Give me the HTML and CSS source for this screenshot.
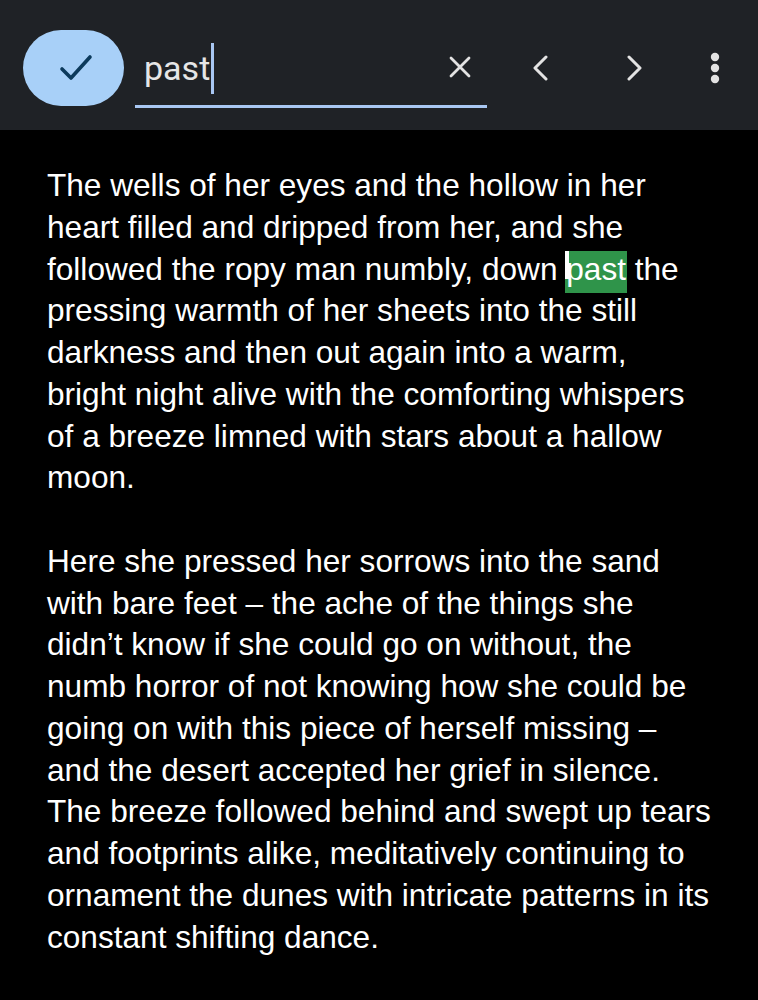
FILE: index.html
```html
<!DOCTYPE html>
<html lang="en">
<head>
<meta charset="utf-8">
<title>Find in page</title>
<link rel="stylesheet" href="styles.css">
</head>
<body>
<header class="findbar">
  <button class="done" aria-label="Done">
    <svg width="40" height="30" viewBox="0 0 40 30"><path d="M8 16 L17 25 L36 4" fill="none" stroke="#0c3a5c" stroke-width="3.6" stroke-linecap="round" stroke-linejoin="round"/></svg>
  </button>
  <div class="field">
    <span class="query">past</span><span class="caret"></span>
    <span class="grow"></span>
    <button class="icon clear" aria-label="Clear">
      <svg width="24" height="24" viewBox="0 0 24 24"><path d="M3 3 L21 21 M21 3 L3 21" stroke="#e3e3e3" stroke-width="2.8" stroke-linecap="round"/></svg>
    </button>
  </div>
  <button class="icon prev" aria-label="Previous">
    <svg width="24" height="26" viewBox="0 0 24 26"><path d="M17 2 L6 13 L17 24" fill="none" stroke="#e3e3e3" stroke-width="3" stroke-linecap="round" stroke-linejoin="round"/></svg>
  </button>
  <button class="icon next" aria-label="Next">
    <svg width="24" height="26" viewBox="0 0 24 26"><path d="M7 2 L18 13 L7 24" fill="none" stroke="#e3e3e3" stroke-width="3" stroke-linecap="round" stroke-linejoin="round"/></svg>
  </button>
  <button class="icon more" aria-label="More">
    <svg width="12" height="32" viewBox="0 0 12 32"><circle cx="6" cy="5" r="4.2" fill="#e3e3e3"/><circle cx="6" cy="16" r="4.2" fill="#e3e3e3"/><circle cx="6" cy="27" r="4.2" fill="#e3e3e3"/></svg>
  </button>
</header>
<main class="page">
  <p>The wells of her eyes and the hollow in her heart filled and dripped from her, and she followed the ropy man numbly, down <mark class="hit">past</mark> the pressing warmth of her sheets into the still darkness and then out again into a warm, bright night alive with the comforting whispers of a breeze limned with stars about a hallow moon.</p>
  <p>Here she pressed her sorrows into the sand with bare feet – the ache of the things she didn’t know if she could go on without, the numb horror of not knowing how she could be going on with this piece of herself missing – and the desert accepted her grief in silence. The breeze followed behind and swept up tears and footprints alike, meditatively continuing to ornament the dunes with intricate patterns in its constant shifting dance.</p>
</main>
</body>
</html>
```
FILE: styles.css
```css
html, body {
  margin: 0;
  padding: 0;
  background: #000;
}
body {
  width: 758px;
  min-height: 1000px;
  overflow: hidden;
}
button {
  border: 0;
  background: none;
  padding: 0;
  margin: 0;
  cursor: pointer;
}
.findbar {
  height: 130px;
  background: #1f2226;
  display: flex;
  align-items: center;
  padding-left: 23px;
  padding-top: 6px;
  box-sizing: border-box;
}
.done {
  width: 101px;
  height: 76px;
  border-radius: 38px;
  background: #a8d0f8;
  display: flex;
  align-items: center;
  justify-content: center;
  flex-shrink: 0;
}
.field {
  margin-left: 11px;
  width: 352px;
  height: 80px;
  box-sizing: border-box;
  border-bottom: 3px solid #a8c7f2;
  display: flex;
  align-items: center;
  padding-left: 9px;
}
.query {
  font-family: Roboto, "Noto Sans", sans-serif;
  font-size: 34px;
  color: #e6e6e6;
  line-height: 40px;
  padding-top: 2px;
}
.caret {
  width: 3px;
  height: 51px;
  background: #a8c7f2;
  margin-left: 1px;
  margin-top: 4px;
}
.grow { flex: 1; }
.icon {
  height: 48px;
  display: flex;
  align-items: center;
  justify-content: center;
  flex-shrink: 0;
}
.clear { width: 48px; margin-right: 3px; }
.prev { width: 108px; }
.next { width: 78px; }
.more { width: 84px; }
.page {
  padding: 35px 46px 0 47px;
  font-family: "Liberation Sans", Arial, sans-serif;
  font-size: 31.6px;
  line-height: 41.75px;
  color: #fff;
}
.page p {
  margin: 0 0 41.75px 0;
}
.hit {
  position: relative;
  background: #2f944a;
  color: #fff;
  padding: 0 1px 6px 1px;
  margin: 0 -1px;
}
.hit::before {
  content: "";
  position: absolute;
  left: 0;
  top: 0;
  width: 4px;
  height: 28px;
  background: #fff;
}
```
